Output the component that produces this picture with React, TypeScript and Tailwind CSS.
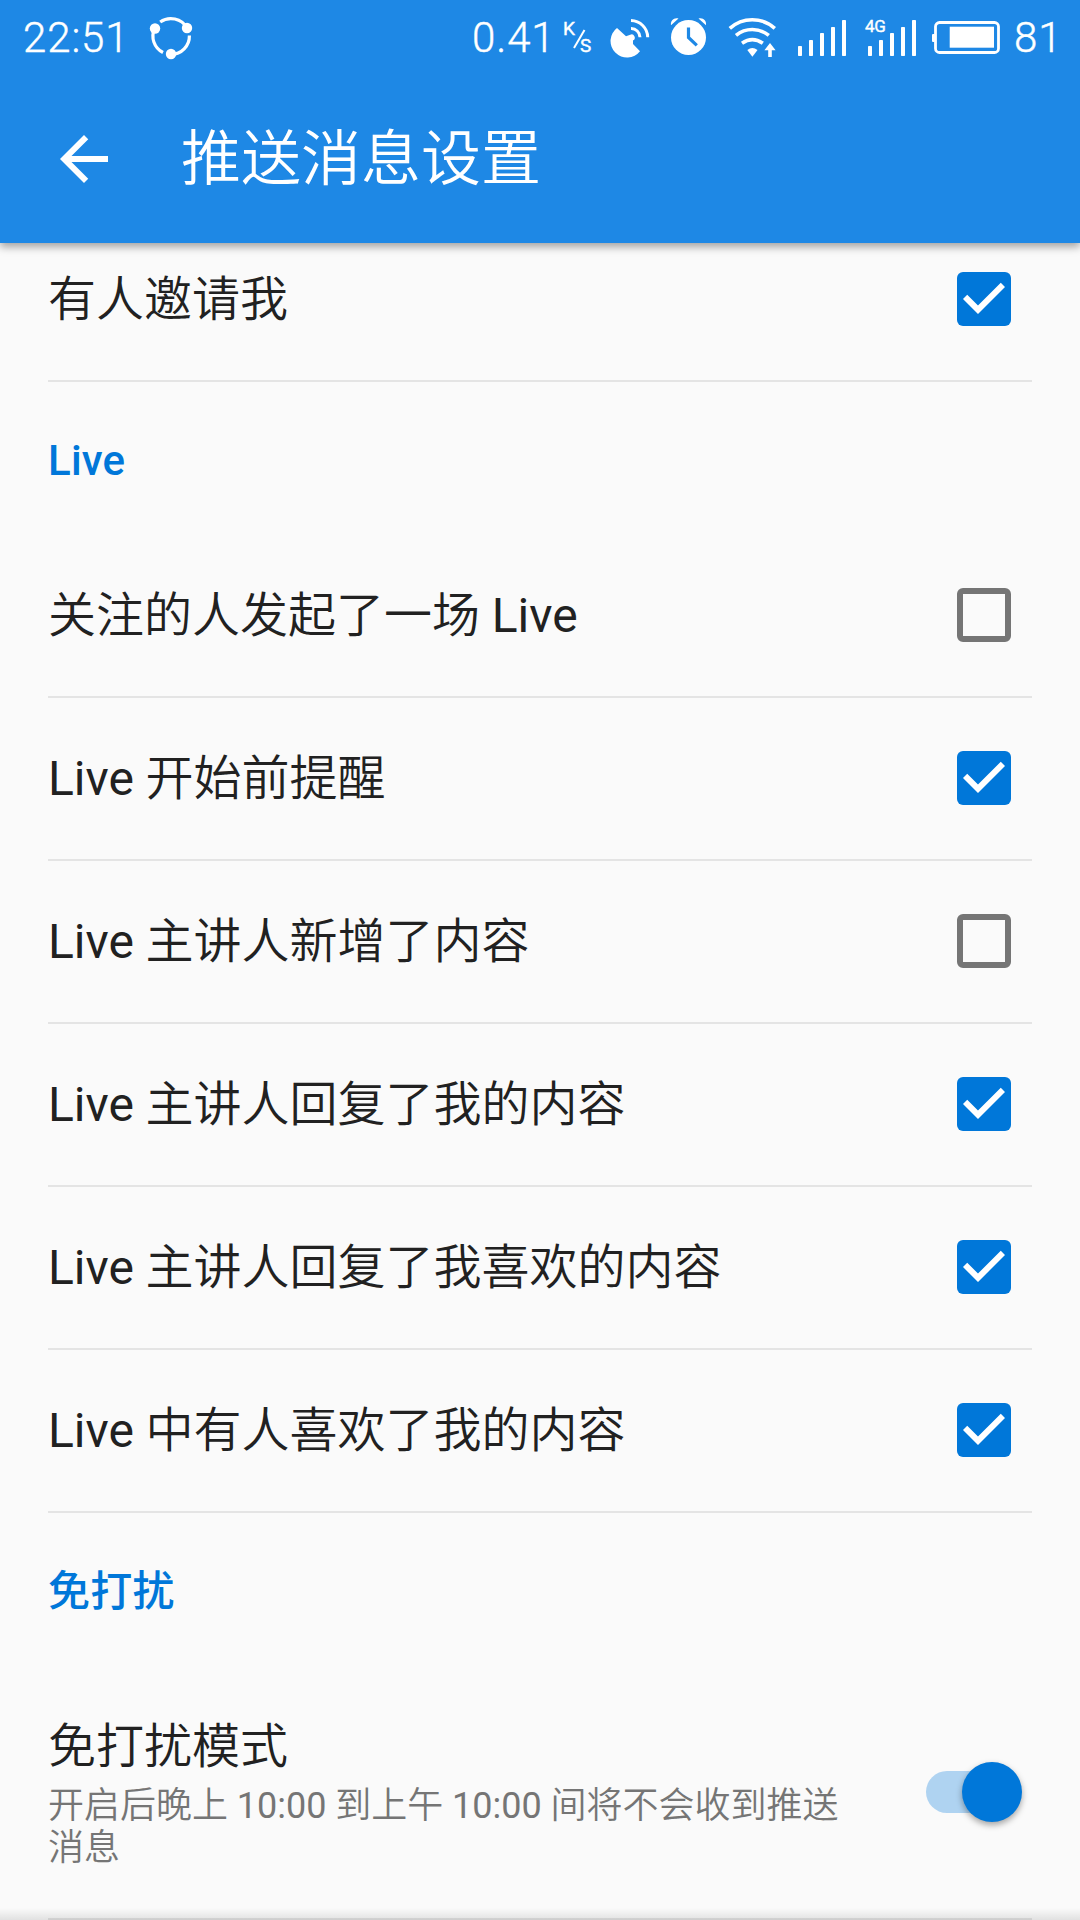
import React from "react";

function Checkbox({ checked }: { checked: boolean }) {
  return (
    <svg role="checkbox" aria-checked={checked} viewBox="0 0 24 24" className="mr-3 mb-px size-[72px] shrink-0">
      {checked ? (
        <>
          <rect x="3" y="3" width="18" height="18" rx="2" fill="#0077d9" />
          <path d="M10 17l-5-5 1.41-1.41L10 14.17l7.59-7.59L19 8l-9 9z" fill="#fff" />
        </>
      ) : (
        <rect x="4" y="4" width="16" height="16" rx="1" fill="none" stroke="#757575" strokeWidth="2" />
      )}
    </svg>
  );
}

// Chinese runs keep the thinner inherited weight; Latin words and times use the regular one.
function MixedText({ text }: { text: string }) {
  return (
    <>
      {text.split(/([A-Za-z0-9:]+)/).map((part, i) =>
        i % 2 === 1 ? (
          <span key={i} className="font-normal">
            {part}
          </span>
        ) : (
          part
        ),
      )}
    </>
  );
}

function Row({ label, checked }: { label: string; checked: boolean }) {
  return (
    <div className="flex h-[163px] items-center justify-between border-b-2 border-[#e4e4e4]">
      <span className="text-[48px] leading-[56px] text-[#212121]">
        <MixedText text={label} />
      </span>
      <Checkbox checked={checked} />
    </div>
  );
}

function Category({ label }: { label: string }) {
  return (
    <div className="flex h-[153px] items-center pt-1 text-[42px] leading-[50px] font-medium tracking-[0.2px] text-[#0077d9]">
      {label}
    </div>
  );
}

function SignalBars() {
  return (
    <svg viewBox="0 0 48 36" className="h-9 w-12" fill="#fff">
      <rect x="0" y="26" width="4" height="10" rx="0.7" />
      <rect x="11" y="20" width="4" height="16" rx="0.7" />
      <rect x="22" y="13" width="4" height="23" rx="0.7" />
      <rect x="33" y="7" width="4" height="29" rx="0.7" />
      <rect x="44" y="0" width="4" height="36" rx="0.7" />
    </svg>
  );
}

function StatusBar() {
  return (
    <div className="flex h-[74px] items-center pl-[23px] text-[42px] leading-[50px] font-light tracking-[0.9px] [-webkit-text-stroke:0.4px_white] *:shrink-0">
      <span className="w-[124px] pt-0.5">22:51</span>
      <svg viewBox="0 0 48 48" className="size-12" fill="none" stroke="#fff" strokeWidth="3.2">
        <path d="M13.2 9A18.5 18.5 0 0 1 40 15" />
        <path d="M7.5 15.5A18.5 18.5 0 0 0 16 39.5" />
        <path d="M42.4 22.5A18.5 18.5 0 0 1 24 41.5" />
        <g fill="#fff" stroke="none">
          <circle cx="8" cy="15.5" r="5.2" />
          <circle cx="40" cy="15" r="5.2" />
          <circle cx="24" cy="41" r="5.2" />
        </g>
      </svg>
      <span className="ml-[277px] w-[92px] pt-0.5">0.41</span>
      <span className="relative h-10 w-[44px] text-[19px] leading-[18px] font-normal tracking-normal">
        <span className="absolute top-[3px] left-[-1px]">K</span>
        <svg viewBox="0 0 14 20" className="absolute top-[12px] left-[8px] h-5 w-[14px]" stroke="#fff" strokeWidth="2">
          <path d="M12.5 1L2 19" />
        </svg>
        <span className="absolute top-[20px] left-[16px]">S</span>
      </span>
      <svg viewBox="0 0 44 46" className="h-[46px] w-11" fill="none" stroke="#fff" strokeWidth="3">
        <path
          d="M9 13.9A16.5 16.5 0 1 0 32 37.2L25 30L25 26.4A3 3 0 0 0 22.2 20.8L18 22.3Z"
          fill="#fff"
          stroke="none"
        />
        <path d="M23 14.6A8.8 8.8 0 0 1 32 23.2M23 6.6A17 17 0 0 1 39.7 23.2" />
      </svg>
      <svg viewBox="0 0 48 48" className="ml-3 size-12">
        <circle cx="24.5" cy="24.5" r="17.5" fill="#fff" />
        <path d="M7 12.2C6.3 7.5 10 4.3 14.5 5.6ZM42 12.2C42.7 7.5 39 4.3 34.5 5.6Z" fill="#fff" />
        <path d="M24.5 14.5V24.5L32.8 32.3" fill="none" stroke="#1e88e5" strokeWidth="3.2" />
      </svg>
      <svg viewBox="0 0 56 46" className="ml-3 h-[46px] w-14" fill="none" stroke="#fff" strokeWidth="3.6">
        <path d="M5.8 14.3C18.5 2.8 38 2.8 50.8 14.3" />
        <path d="M12 21.4C21.5 13.6 35.2 13.6 44.8 21.4" />
        <path d="M18 29.2C24.5 24.7 32.2 24.7 38.8 29.2" />
        <path d="M23.3 36Q28.3 32.2 33.5 36L28.4 42.8Z" fill="#fff" stroke="none" />
        <path d="M46 29L51.6 36.3H47.8V43H44.2V36.3H40.4Z" fill="#fff" stroke="none" />
      </svg>
      <div className="mt-0.5 ml-[18px]">
        <SignalBars />
      </div>
      <div className="relative mt-0.5 ml-[22px]">
        <SignalBars />
        <span className="absolute -top-[3px] -left-[3px] text-[17px] leading-[18px] font-normal tracking-tight">
          4G
        </span>
      </div>
      <svg viewBox="0 0 70 36" className="mt-0.5 ml-4 h-9 w-[70px]">
        <rect x="3.5" y="2.5" width="63" height="30" rx="4" fill="none" stroke="#fff" strokeWidth="2.8" />
        <rect x="0" y="14" width="3" height="8" rx="1" fill="#fff" />
        <rect x="17.7" y="6.7" width="44.3" height="21" fill="#fff" />
      </svg>
      <span className="ml-[12px] pt-0.5">81</span>
    </div>
  );
}

const rows = [
  { label: "关注的人发起了一场 Live", checked: false },
  { label: "Live 开始前提醒", checked: true },
  { label: "Live 主讲人新增了内容", checked: false },
  { label: "Live 主讲人回复了我的内容", checked: true },
  { label: "Live 主讲人回复了我喜欢的内容", checked: true },
  { label: "Live 中有人喜欢了我的内容", checked: true },
];

export default function App() {
  return (
    <div
      lang="zh-CN"
      className="relative h-[1920px] w-[1080px] overflow-hidden bg-[#fafafa] font-['Roboto','Noto_Sans_CJK_SC',sans-serif] font-[350]"
    >
      <header className="relative z-10 h-[243px] bg-[#1e88e5] text-white shadow-[0_4px_8px_rgba(0,0,0,0.35)]">
        <StatusBar />
        <div className="flex h-[169px] items-center pt-px pl-12">
          <svg viewBox="0 0 24 24" className="size-[72px]" fill="#fff">
            <path d="M20 11H7.83l5.59-5.59L12 4l-8 8 8 8 1.41-1.41L7.83 13H20v-2z" />
          </svg>
          <h1 className="ml-[61px] pt-0.5 text-[60px] leading-[72px] font-[350]">推送消息设置</h1>
        </div>
      </header>
      <main className="-mt-6 px-12">
        <Row label="有人邀请我" checked />
        <Category label="Live" />
        {rows.map((r) => (
          <Row key={r.label} label={r.label} checked={r.checked} />
        ))}
        <Category label="免打扰" />
        <div className="flex h-[254px] items-center justify-between border-b-2 border-[#e4e4e4]">
          <div className="w-[810px]">
            <div className="text-[48px] leading-[56px] text-[#212121]">免打扰模式</div>
            <p className="mt-[10px] -mb-1 text-[36px] leading-[42px] text-[#757575]">
              <MixedText text="开启后晚上 10:00 到上午 10:00 间将不会收到推送消息" />
            </p>
          </div>
          <div role="switch" aria-checked="true" className="mr-[10px] flex h-[60px] w-24 items-center">
            <div className="h-[42px] w-[84px] rounded-full bg-[#afd3f1]" />
            <div className="-ml-[48px] size-[60px] shrink-0 rounded-full bg-[#0077d9] shadow-[0_3px_6px_rgba(0,0,0,0.35)]" />
          </div>
        </div>
      </main>
      <div className="absolute inset-x-0 bottom-0 h-3 bg-linear-to-b from-transparent to-black/10" />
    </div>
  );
}
